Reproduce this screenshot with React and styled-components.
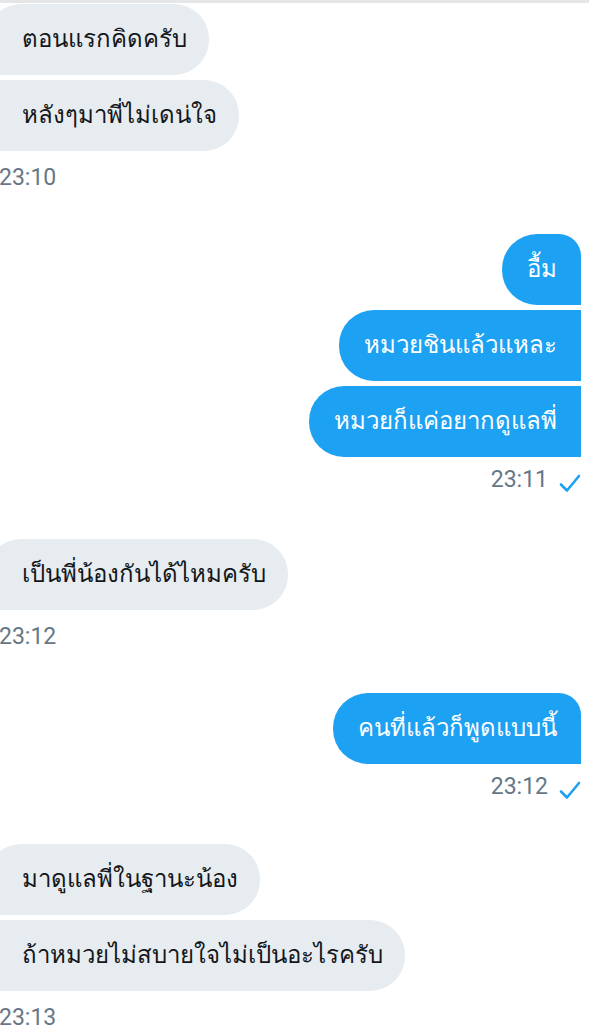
import React from "react";
import styled, { createGlobalStyle } from "styled-components";

const GlobalStyle = createGlobalStyle`
  html, body {
    margin: 0;
    padding: 0;
    background: #ffffff;
    overflow: hidden;
  }
  body {
    font-family: Roboto, "Noto Sans", "DejaVu Sans", sans-serif;
  }
`;

const Screen = styled.div`
  width: 589px;
  height: 1033px;
  overflow: hidden;
  position: relative;
  background: #ffffff;
  border-top: 3px solid #e4e6e8;
  box-sizing: border-box;
  padding-top: 1px;
`;

const Thread = styled.div`
  display: flex;
  flex-direction: column;
`;

const Group = styled.div`
  display: flex;
  flex-direction: column;
  align-items: ${(p) => (p.mine ? "flex-end" : "flex-start")};
  gap: 5px;
  margin-top: ${(p) => p.top}px;
  padding-right: ${(p) => (p.mine ? 8 : 0)}px;
`;

const Bubble = styled.div`
  height: 71px;
  box-sizing: border-box;
  display: flex;
  align-items: center;
  font-size: 24px;
  line-height: 1;
  white-space: nowrap;
  padding-bottom: 2px;
  color: ${(p) => (p.mine ? "#ffffff" : "#14171a")};
  background: ${(p) => (p.mine ? "#1da1f2" : "#e6ecf0")};
  ${(p) =>
    p.mine
      ? `
    padding-left: 25px;
    padding-right: 24px;
    border-radius: 35px ${p.first ? "22px" : "0"} 0 35px;
  `
      : `
    margin-left: -14px;
    padding-left: 36px;
    padding-right: 22px;
    border-radius: ${p.first ? "35px" : "0"} 35px 35px 0;
  `}
`;

const Meta = styled.div`
  display: flex;
  align-items: center;
  gap: 11px;
  height: 24px;
  margin-top: ${(p) => (p.mine ? 5 : 9)}px;
  margin-left: ${(p) => (p.mine ? 0 : -1)}px;
  font-size: 23px;
  color: #657786;
`;

const Check = styled.svg`
  width: 22px;
  height: 22px;
  margin-top: 8px;
`;

const CheckIcon = () => (
  <Check viewBox="0 0 22 22" fill="none">
    <path
      d="M2 12.5 L8 18.5 L20 4"
      stroke="#1da1f2"
      strokeWidth="2.6"
      strokeLinecap="round"
      strokeLinejoin="round"
    />
  </Check>
);

const groups = [
  { mine: false, top: 0, texts: ["ตอนแรกคิดครับ", "หลังๆมาพี่ไม่เดน่ใจ"], time: "23:10" },
  {
    mine: true,
    top: 45,
    texts: ["อื้ม", "หมวยชินแล้วแหละ", "หมวยก็แค่อยากดูแลพี่"],
    time: "23:11",
  },
  { mine: false, top: 48, texts: ["เป็นพี่น้องกันได้ไหมครับ"], time: "23:12" },
  { mine: true, top: 45, texts: ["คนที่แล้วก็พูดแบบนี้"], time: "23:12" },
  {
    mine: false,
    top: 46,
    texts: ["มาดูแลพี่ในฐานะน้อง", "ถ้าหมวยไม่สบายใจไม่เป็นอะไรครับ"],
    time: "23:13",
  },
];

export default function App() {
  return (
    <Screen>
      <GlobalStyle />
      <Thread>
        {groups.map((g, i) => (
          <Group key={i} mine={g.mine} top={g.top}>
            {g.texts.map((t, j) => (
              <Bubble key={j} mine={g.mine} first={j === 0}>
                {t}
              </Bubble>
            ))}
            <Meta mine={g.mine}>
              <span>{g.time}</span>
              {g.mine && <CheckIcon />}
            </Meta>
          </Group>
        ))}
      </Thread>
    </Screen>
  );
}
